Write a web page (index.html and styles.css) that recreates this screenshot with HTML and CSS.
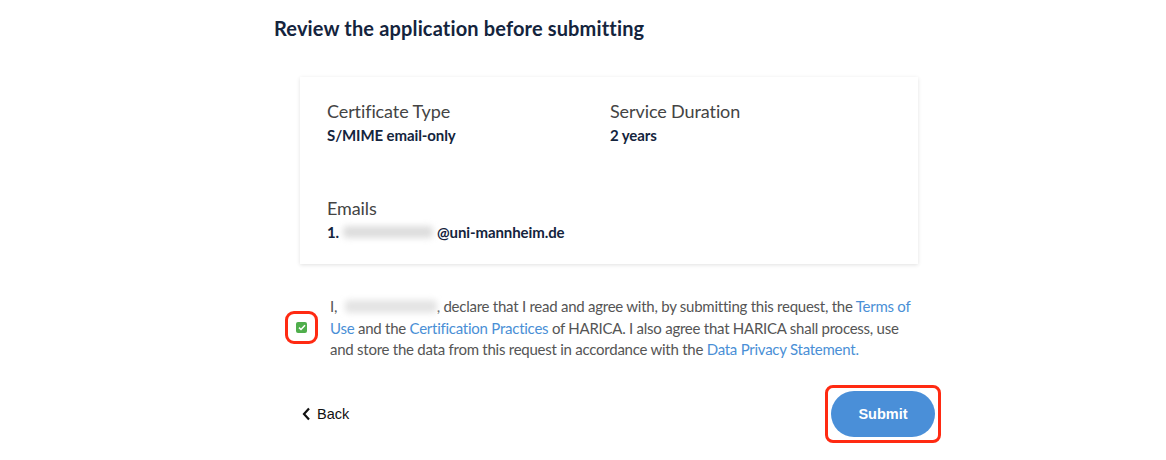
FILE: index.html
```html
<!DOCTYPE html>
<html lang="en">
<head>
<meta charset="utf-8">
<link rel="stylesheet" href="styles.css">
</head>
<body>
<main class="page">
  <h1 class="title">Review the application before submitting</h1>
  <section class="card">
    <div class="grid">
      <div class="field">
        <div class="label">Certificate Type</div>
        <div class="value">S/MIME email-only</div>
      </div>
      <div class="field">
        <div class="label">Service Duration</div>
        <div class="value">2 years</div>
      </div>
      <div class="field emails">
        <div class="label">Emails</div>
        <div class="value">1. <span class="blur email-blur"></span>@uni-mannheim.de</div>
      </div>
    </div>
  </section>
  <div class="consent">
    <div class="check-wrap">
      <span class="checkbox">
        <svg width="8" height="7" viewBox="0 0 8 7"><path d="M1 3.6 L3 5.5 L7 1.2" fill="none" stroke="#fff" stroke-width="1.5"/></svg>
      </span>
    </div>
    <p class="consent-text">I, <span class="blur name-blur"></span>, declare that I read and agree with, by submitting this request, the <a href="#">Terms of Use</a> and the <a href="#">Certification Practices</a> of HARICA. I also agree that HARICA shall process, use and store the data from this request in accordance with the <a href="#">Data Privacy Statement.</a></p>
  </div>
  <div class="actions">
    <a class="back" href="#">
      <svg width="9" height="14" viewBox="0 0 9 14"><path d="M7 1.5 L2 7 L7 12.5" fill="none" stroke="#111" stroke-width="2.2"/></svg>
      <span>Back</span>
    </a>
    <div class="submit-wrap">
      <button class="submit">Submit</button>
    </div>
  </div>
</main>
</body>
</html>
```
FILE: styles.css
```css
* { box-sizing: border-box; }
html, body { margin: 0; padding: 0; background: #fff; }
body { font-family: Lato, "Open Sans", sans-serif; }
.page {
  width: 680px;
  margin-left: 274px;
  padding-top: 15px;
}
.title {
  margin: 0;
  font-size: 20px;
  font-weight: 700;
  color: #14243d;
  line-height: 26px;
  letter-spacing: 0.15px;
}
.card {
  margin-top: 36px;
  margin-left: 26px;
  width: 618px;
  height: 187px;
  background: #fff;
  box-shadow: 0 1px 4px rgba(0,0,0,0.12);
  padding: 23px 27px 0 27px;
}
.grid {
  display: grid;
  grid-template-columns: 283px 1fr;
  row-gap: 52px;
}
.label {
  font-size: 18px;
  color: #444;
  line-height: 22px;
  letter-spacing: -0.1px;
}
.value {
  font-size: 15px;
  font-weight: 700;
  color: #14243d;
  line-height: 20px;
  margin-top: 3px;
  display: flex;
  align-items: center;
  letter-spacing: -0.1px;
}
.blur {
  display: inline-block;
  background: #ddd;
  filter: blur(3px);
  border-radius: 4px;
}
.email-blur { width: 90px; height: 12px; margin-left: 4px; margin-right: 4px; }
.name-blur { width: 92px; height: 13px; margin-left: 4px; vertical-align: -1px; background: #e4e4e4; }
.consent {
  display: flex;
  align-items: center;
  margin-top: 31px;
  margin-left: 11px;
}
.check-wrap {
  width: 33px;
  height: 33px;
  border: 3px solid #ff2a12;
  border-radius: 9px;
  display: flex;
  align-items: center;
  justify-content: center;
  flex-shrink: 0;
}
.checkbox {
  width: 11px;
  height: 11px;
  background: #4fae4c;
  border-radius: 2px;
  display: flex;
  align-items: center;
  justify-content: center;
}
.consent-text {
  margin: 0 0 0 12px;
  width: 586px;
  font-size: 15px;
  line-height: 21.5px;
  color: #555;
  letter-spacing: -0.25px;
  padding-top: 1px;
}
.consent-text a { color: #4a8fd6; text-decoration: none; }
.actions {
  display: flex;
  justify-content: space-between;
  align-items: center;
  margin-top: 24px;
  margin-left: 28px;
  width: 639px;
}
.back {
  display: flex;
  align-items: center;
  gap: 6px;
  text-decoration: none;
  color: #111;
  font-family: "Liberation Sans", Arial, sans-serif;
  font-size: 14.5px;
}
.submit-wrap {
  border: 3px solid #ff2a12;
  border-radius: 8px;
  padding: 3px;
}
.submit {
  width: 104px;
  height: 46px;
  border: none;
  border-radius: 23px;
  background: #4a8fd8;
  color: #fff;
  font-family: "Liberation Sans", Arial, sans-serif;
  font-weight: 700;
  font-size: 14.5px;
  display: block;
}
```
